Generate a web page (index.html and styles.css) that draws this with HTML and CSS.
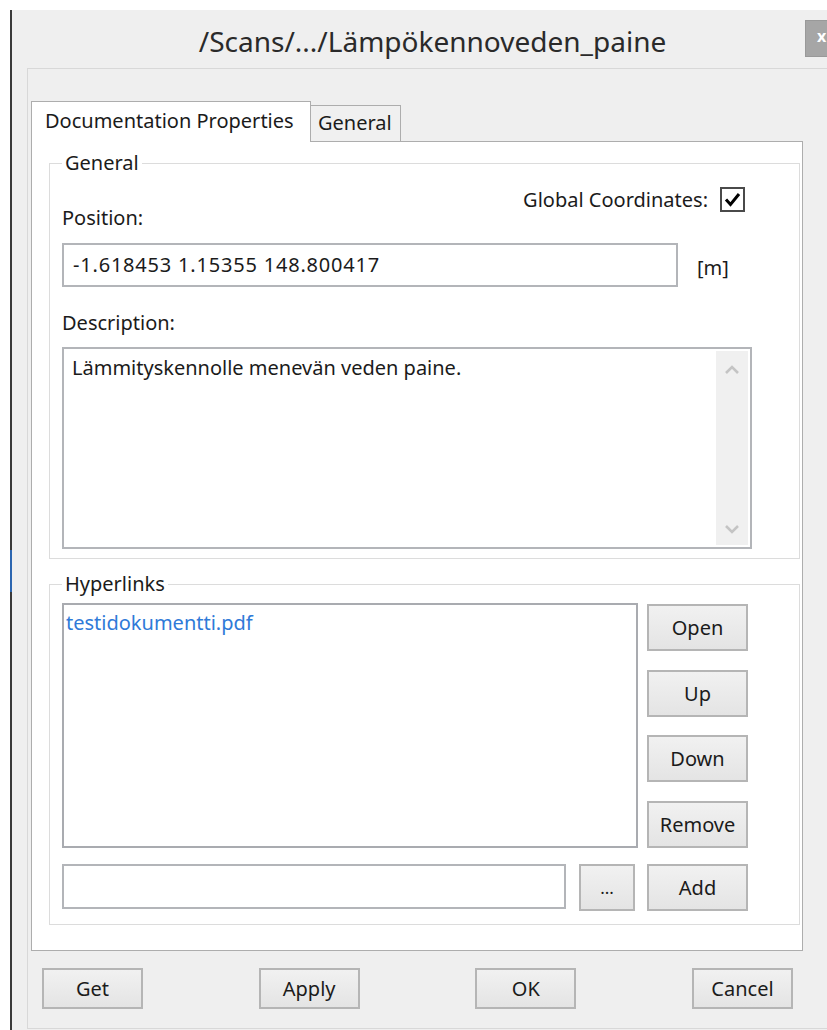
FILE: index.html
```html
<!DOCTYPE html>
<html lang="fi">
<head>
<meta charset="utf-8">
<title>Documentation Properties</title>
<link rel="stylesheet" href="styles.css">
</head>
<body>
<div class="window">
  <div class="edge"></div>
  <div class="frame">
    <header class="titlebar">
      <h1 class="title">/Scans/.../Lämpökennoveden_paine</h1>
      <span class="close">x</span>
    </header>

    <main class="panel">
      <div class="tabbar">
        <div class="tab active">Documentation Properties</div>
        <div class="tab">General</div>
      </div>

      <section class="pane">
        <fieldset class="group general">
          <legend>General</legend>
          <div class="row-head">
            <span class="pos-label">Position:</span>
            <label class="global">
              <span>Global Coordinates:</span>
              <span class="checkbox">
                <svg viewBox="0 0 21 21" width="21" height="21"><path d="M4 10.5 L8.5 15.5 L17 5" fill="none" stroke="#000" stroke-width="3"/></svg>
              </span>
            </label>
          </div>
          <div class="field-row">
            <div class="input position">-1.618453 1.15355 148.800417</div>
            <span class="unit">[m]</span>
          </div>
          <div class="desc-label">Description:</div>
          <div class="textarea">
            <div class="textarea-text">Lämmityskennolle menevän veden paine.</div>
            <div class="scrollbar">
              <svg viewBox="0 0 16 10" width="16" height="10"><path d="M2 8 L8 2 L14 8" fill="none" stroke="#c4c4c4" stroke-width="2.6"/></svg>
              <svg viewBox="0 0 16 10" width="16" height="10"><path d="M2 2 L8 8 L14 2" fill="none" stroke="#c4c4c4" stroke-width="2.6"/></svg>
            </div>
          </div>
        </fieldset>

        <fieldset class="group links">
          <legend>Hyperlinks</legend>
          <div class="links-body">
            <div class="listbox">
              <div class="link-item">testidokumentti.pdf</div>
            </div>
            <div class="side-buttons">
              <button class="btn">Open</button>
              <button class="btn">Up</button>
              <button class="btn">Down</button>
              <button class="btn">Remove</button>
            </div>
          </div>
          <div class="add-row">
            <div class="input add-input"></div>
            <button class="btn browse">...</button>
            <button class="btn">Add</button>
          </div>
        </fieldset>
      </section>

      <div class="actions">
        <button class="btn footer-btn">Get</button>
        <button class="btn footer-btn">Apply</button>
        <button class="btn footer-btn">OK</button>
        <button class="btn footer-btn">Cancel</button>
      </div>
    </main>
  </div>
</div>
</body>
</html>
```

FILE: styles.css
```css
* {
  box-sizing: border-box;
}

html,
body {
  margin: 0;
  height: 100%;
}

body {
  background: #ffffff;
  font-family: "Noto Sans", "Open Sans", sans-serif;
  font-size: 20px;
  color: #1b1b1b;
  overflow: hidden;
}

/* Dialog window */
.window {
  display: flex;
  width: 830px;
  height: 1020px;
  margin: 10px 0 0 10px;
}

.edge {
  width: 2px;
  flex: none;
  background: linear-gradient(to bottom, #3a3a3a 0 540px, #2c66b0 540px 582px, #3a3a3a 582px);
}

.frame {
  flex: 1;
  display: flex;
  flex-direction: column;
  background: #efefef;
}

/* Title bar */
.titlebar {
  height: 58px;
  display: flex;
  align-items: flex-start;
  flex: none;
}

.title {
  flex: 1;
  margin: 0;
  padding: 12px 0 0 48px;
  text-align: center;
  font-size: 28px;
  line-height: 38px;
  font-weight: 400;
  color: #2a2a2a;
  white-space: nowrap;
}

.close {
  width: 35px;
  height: 37px;
  margin-top: 10px;
  padding-left: 11px;
  background: #a6a6a6;
  border: 1px solid #999999;
  color: #ffffff;
  font-size: 16px;
  line-height: 30px;
  font-weight: 700;
}

/* Content panel */
.panel {
  flex: 1;
  margin: 0 0 1px 15px;
  padding: 32px 0 0 3px;
  border: 1px solid #d8d8d8;
  border-right: none;
}

.tabbar {
  display: flex;
  align-items: flex-end;
}

.tab {
  height: 36px;
  width: 90px;
  padding-left: 7px;
  line-height: 34px;
  background: #f0f0f0;
  border: 1px solid #adadad;
  border-left: none;
  border-bottom: none;
  white-space: nowrap;
}

.tab.active {
  position: relative;
  z-index: 1;
  width: 280px;
  height: 41px;
  margin-bottom: -1px;
  padding-left: 13px;
  line-height: 38px;
  background: #ffffff;
  border-left: 1px solid #adadad;
  border-right: 1px solid #adadad;
}

.pane {
  width: 772px;
  height: 810px;
  padding: 10px 2px 0 17px;
  background: #ffffff;
  border: 1px solid #adadad;
}

/* Group boxes */
.group {
  margin: 0;
  min-width: 0;
  padding: 0 47px 9px 12px;
  border: 1px solid #dcdcdc;
}

.group legend {
  padding: 0 3px;
  line-height: 22px;
}

.group.links {
  margin-top: 14px;
  padding-bottom: 13px;
}

.row-head {
  display: flex;
  justify-content: space-between;
  align-items: flex-start;
  margin-top: 13px;
}

.pos-label {
  padding-top: 20px;
  line-height: 22px;
}

.global {
  display: flex;
  align-items: center;
  gap: 12px;
  margin-right: 7px;
  line-height: 22px;
}

.checkbox {
  width: 25px;
  height: 25px;
  border: 2px solid #4a4a4a;
  background: #ffffff;
  display: flex;
  align-items: center;
  justify-content: center;
}

.field-row {
  display: flex;
  align-items: center;
  gap: 19px;
  margin-top: 14px;
}

.input {
  background: #ffffff;
  border: 2px solid #b3b5b9;
  line-height: 22px;
  white-space: nowrap;
}

.input.position {
  width: 616px;
  height: 44px;
  padding: 9px 0 0 9px;
  letter-spacing: 0.8px;
}

.unit {
  padding-top: 5px;
  line-height: 22px;
}

.desc-label {
  margin-top: 25px;
  line-height: 22px;
}

.textarea {
  display: flex;
  height: 202px;
  margin-top: 13px;
  background: #ffffff;
  border: 2px solid #b3b5b9;
}

.textarea-text {
  flex: 1;
  padding: 8px 0 0 8px;
  line-height: 22px;
}

.scrollbar {
  width: 32px;
  margin: 2px 2px 2px 0;
  padding: 14px 0 11px;
  background: #f0f0f0;
  display: flex;
  flex-direction: column;
  justify-content: space-between;
  align-items: center;
}

/* Hyperlinks */
.links-body {
  display: flex;
  gap: 9px;
  margin-top: 8px;
  height: 245px;
}

.listbox {
  width: 576px;
  background: #ffffff;
  border: 2px solid #a9abb0;
  padding: 7px 0 0 2px;
}

.link-item {
  color: #2f7ad8;
  line-height: 22px;
}

.side-buttons {
  display: flex;
  flex-direction: column;
  justify-content: space-between;
  padding-top: 1px;
}

.btn {
  width: 101px;
  height: 47px;
  padding: 0;
  font: inherit;
  color: #1b1b1b;
  background: linear-gradient(#f1f1f1, #e4e4e4);
  border: 2px solid #b5b5b5;
  border-radius: 0;
}

.add-row {
  display: flex;
  align-items: flex-start;
  margin-top: 16px;
}

.add-input {
  width: 504px;
  height: 45px;
}

.btn.browse {
  width: 56px;
  margin: 0 12px 0 13px;
  font-size: 17px;
}

/* Dialog buttons */
.actions {
  display: flex;
  justify-content: space-between;
  width: 751px;
  margin: 17px 0 0 11px;
}

.btn.footer-btn {
  height: 41px;
}
```
